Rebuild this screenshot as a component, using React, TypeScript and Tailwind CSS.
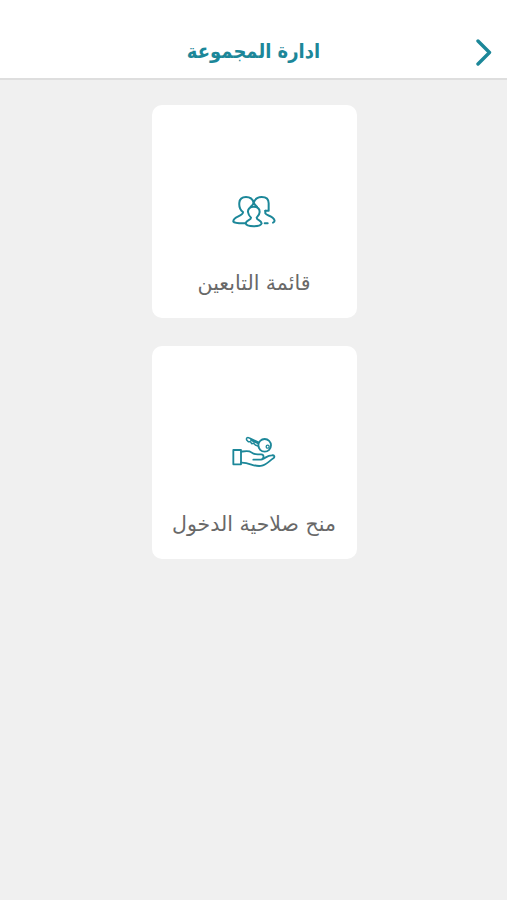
import type { ReactNode } from "react";

function GroupIcon() {
  return (
    <svg width="44" height="36" viewBox="24 24 132 108" fill="none" stroke="#1c8799" strokeWidth="6" strokeLinecap="round" strokeLinejoin="round">
      <path d="M64 112 H57 C42 112 31 111 28 107 C27 99 34 95 43 91 C52 87 58 84 57 78 C48 72 45 60 46 50 C47 39 55 33 66 33 C78 33 86 39 89 50 C93 39 102 33 113 33 C126 33 134 40 134 52 V74 H124" />
      <path d="M124 74 V82 C127 88 138 88 146 95 C153 101 154 107 147 110" />
      <path d="M89 62 C78 62 71 69 72 78 C73 87 77 91 81 95 C81 103 67 102 65 112 C68 124 110 124 113 112 C111 102 98 103 98 95 C102 91 107 86 107 78 C107 68 100 62 89 62 Z" />
      <path d="M80 62 C85 58 88 55 89 50 C91 55 94 58 99 62" />
      <path d="M122 112 L131 112" />
    </svg>
  );
}

function KeyHandIcon() {
  return (
    <svg width="44" height="34" viewBox="24 24 132 102" fill="none" stroke="#1c8799" strokeWidth="5.5" strokeLinecap="round" strokeLinejoin="round">
      <rect x="28" y="66" width="23" height="43" />
      <path d="M52 71 C66 69 75 67 82 73 C88 78 92 79 101 79 H112 C121 79 121 94 111 95 H88" />
      <path d="M118 92 C126 88 133 82 143 82 C152 81 153 87 148 91 C136 99 127 110 114 113 C92 119 78 103 52 104" />
      <circle cx="122" cy="52" r="19" />
      <circle cx="131" cy="56" r="4.5" strokeWidth="4" />
      <path d="M105 43 L76 30 C70 27 66 30 68 36 L73 41 L79 41 L83 47 L89 46 L94 51 L104 55 M80 36 L103 47" strokeWidth="4.5" />
    </svg>
  );
}

function Card({ icon, label }: { icon: ReactNode; label: string }) {
  return (
    <button className="flex h-[213px] w-[205px] flex-col items-center rounded-[10px] bg-white pt-[89px] text-[#686868]">
      <span className="flex h-9 items-center">{icon}</span>
      <span className="mt-[37px] text-[20.5px] leading-[32px] whitespace-nowrap">{label}</span>
    </button>
  );
}

export default function App() {
  return (
    <div dir="rtl" className="min-h-[900px] w-full bg-[#f0f0f0] font-['DejaVu_Sans',sans-serif]">
      <header className="grid h-20 grid-cols-[46px_1fr_46px] items-center border-b-2 border-[#dedede] bg-white pt-[26px]">
        <button className="flex justify-center">
          <svg width="18" height="28" viewBox="0 0 18 28" fill="none" stroke="#1c8799" strokeWidth="3.4" strokeLinecap="round" strokeLinejoin="round">
            <path d="M3 3 L14.5 14.5 L3 26" />
          </svg>
        </button>
        <h1 className="-mt-0.5 text-center font-['DejaVu_Sans_Condensed','DejaVu_Sans',sans-serif] text-[20px] font-bold whitespace-nowrap text-[#1c8799] [font-stretch:condensed]">ادارة المجموعة</h1>
      </header>
      <main className="flex flex-col items-center gap-7 pt-[25px] pl-px">
        <Card icon={<GroupIcon />} label="قائمة التابعين" />
        <Card icon={<KeyHandIcon />} label="منح صلاحية الدخول" />
      </main>
    </div>
  );
}
